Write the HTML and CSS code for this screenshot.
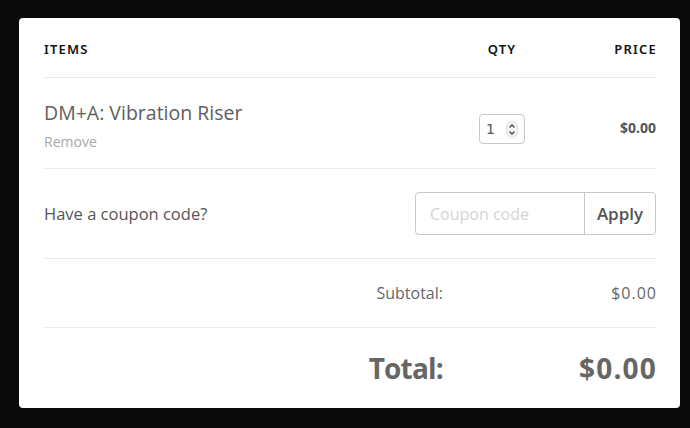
FILE: index.html
```html
<!DOCTYPE html>
<html>
<head>
<meta charset="utf-8">
<link rel="stylesheet" href="styles.css">
</head>
<body>
<div class="card">
  <div class="row head">
    <div class="col-item">ITEMS</div>
    <div class="col-qty">QTY</div>
    <div class="col-price">PRICE</div>
  </div>
  <div class="row item">
    <div class="col-item">
      <div class="name">DM+A: Vibration Riser</div>
      <div class="remove">Remove</div>
    </div>
    <div class="col-qty">
      <div class="qty">
        <span class="qty-val">1</span>
        <span class="spin">
          <svg width="12" height="17" viewBox="0 0 12 17">
            <rect x="0.5" y="0.5" width="11" height="16" rx="5.5" fill="#f6f6f6" stroke="#dcdcdc"/>
            <path d="M3.5 6.5 L6 4 L8.5 6.5" fill="none" stroke="#444" stroke-width="1.3"/>
            <path d="M3.5 10.5 L6 13 L8.5 10.5" fill="none" stroke="#444" stroke-width="1.3"/>
          </svg>
        </span>
      </div>
    </div>
    <div class="col-price price">$0.00</div>
  </div>
  <div class="row coupon">
    <div class="coupon-label">Have a coupon code?</div>
    <div class="coupon-form">
      <div class="coupon-input">Coupon code</div>
      <div class="coupon-btn">Apply</div>
    </div>
  </div>
  <div class="row sum subtotal">
    <div class="sum-label">Subtotal:</div>
    <div class="sum-val">$0.00</div>
  </div>
  <div class="row sum total">
    <div class="sum-label">Total:</div>
    <div class="sum-val">$0.00</div>
  </div>
</div>
</body>
</html>
```
FILE: styles.css
```css
html, body {
  margin: 0;
  padding: 0;
  background: #0a0a0a;
}
body {
  padding: 18px 10px 20px 19px;
  font-family: "Open Sans", "Noto Sans", sans-serif;
  color: #555;
}
.card {
  width: 661px;
  height: 390px;
  background: #fff;
  border-radius: 4px;
  padding: 0 24px 0 25px;
  box-sizing: border-box;
  display: flex;
  flex-direction: column;
}
.row {
  display: grid;
  grid-template-columns: 1fr 78px 115px;
  align-items: center;
  border-bottom: 1px solid #ececec;
}
.row:last-child { border-bottom: none; }
.head {
  height: 60px;
  box-sizing: border-box;
  padding-top: 2px;
  font-family: "Noto Sans", sans-serif;
  font-weight: 600;
  font-size: 13px;
  letter-spacing: 1.2px;
  color: #111;
}
.col-qty { display: flex; justify-content: center; }
.col-price { text-align: right; }
.head .col-price { margin-right: -1px; }
.item { height: 91px; box-sizing: border-box; }
.name {
  font-size: 19.5px;
  color: #5e5e5e;
  line-height: 24px;
  margin-top: 6px;
}
.remove {
  font-size: 14px;
  color: #a8a8a8;
  margin-top: 8px;
  line-height: 18px;
}
.qty {
  width: 46px;
  height: 30px;
  box-sizing: border-box;
  border: 1px solid #c8c8c8;
  border-radius: 4px;
  display: flex;
  align-items: center;
  padding-left: 6px;
  margin-top: 12px;
  font-family: "DejaVu Sans", sans-serif;
  font-size: 14px;
  color: #555;
}
.qty-val { flex: 1; text-align: left; }
.spin { display: flex; margin-right: 6px; }
.price {
  font-weight: bold;
  font-size: 14px;
  color: #555;
  font-family: "Noto Sans", sans-serif;
  margin-top: 8px;
}
.coupon {
  height: 90px;
  box-sizing: border-box;
  display: flex;
  justify-content: space-between;
}
.coupon-label { font-size: 16.5px; color: #555; }
.coupon-form {
  display: flex;
  height: 43px;
  border: 1px solid #c8c8c8;
  border-radius: 4px;
  box-sizing: border-box;
}
.coupon-input {
  width: 169px;
  box-sizing: border-box;
  padding-left: 14px;
  display: flex;
  align-items: center;
  font-size: 16px;
  color: #d4d4d4;
  border-right: 1px solid #c8c8c8;
}
.coupon-btn {
  width: 70px;
  display: flex;
  align-items: center;
  justify-content: center;
  font-size: 17px;
  font-weight: 600;
  color: #555;
}
.sum {
  grid-template-columns: 1fr 213px;
}
.sum-label { text-align: right; }
.sum-val { text-align: right; }
.subtotal {
  height: 68px;
  font-size: 16px;
  color: #666;
}
.subtotal .sum-val { letter-spacing: 1px; margin-right: -1px; }
.total {
  flex: 1;
  font-size: 28px;
  font-weight: bold;
  color: #666;
}
.total .sum-label { letter-spacing: -0.8px; }
.total .sum-val { letter-spacing: 1.2px; margin-right: -1px; }
```
